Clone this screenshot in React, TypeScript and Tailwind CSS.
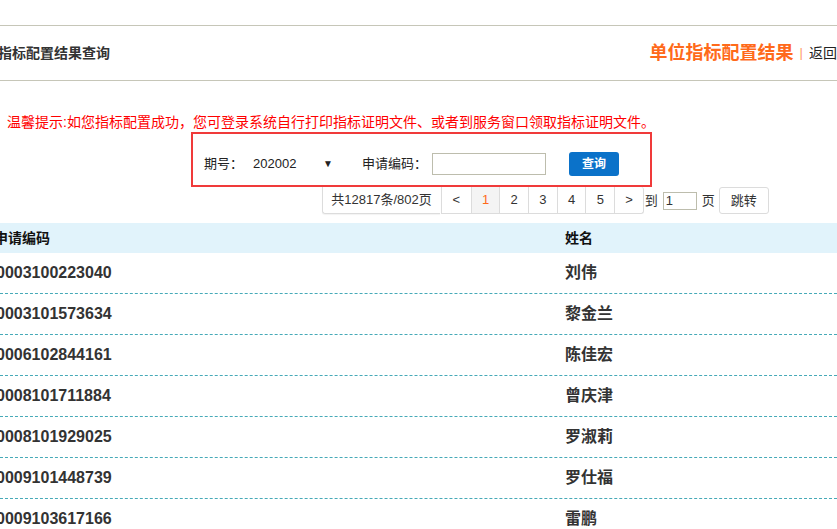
const rows: [string, string][] = [
  ["0003100223040", "刘伟"],
  ["0003101573634", "黎金兰"],
  ["0006102844161", "陈佳宏"],
  ["0008101711884", "曾庆津"],
  ["0008101929025", "罗淑莉"],
  ["0009101448739", "罗仕福"],
  ["0009103617166", "雷鹏"],
];

const pages = ["<", "1", "2", "3", "4", "5", ">"];

export default function App() {
  return (
    <div className="w-[837px] h-[529px] overflow-hidden bg-white text-[#333] font-['Liberation_Sans','Noto_Sans_CJK_SC',sans-serif]">
      <div className="h-[25px]" />

      {/* top bar */}
      <div className="flex items-center h-[56px] border-y border-[#c6c6b8]">
        <h2 className="ml-[-2px] text-[14px] font-bold text-[#333]">指标配置结果查询</h2>
        <div className="ml-auto mr-0 flex items-center shrink-0">
          <span className="text-[18px] font-bold text-[#ff6a1a]">单位指标配置结果</span>
          <span className="mx-[6px] text-[13px] text-[#ff9a66]">|</span>
          <span className="text-[14px] text-[#222]">返回</span>
        </div>
      </div>

      <p className="mt-[31px] ml-[7px] h-[20px] leading-[20px] text-[14px] text-[#ff0000] whitespace-nowrap">
        温馨提示:如您指标配置成功，您可登录系统自行打印指标证明文件、或者到服务窗口领取指标证明文件。
      </p>

      {/* search form */}
      <div className="ml-[191px] w-[461px] h-[55px] border-2 border-[#f03a3a] flex items-center pl-[11px] text-[13px] text-[#222] pt-[8px]">
        <span>期号：</span>
        <div className="ml-[10px] w-[80px] flex items-center">
          <span>202002</span>
          <span className="ml-auto text-[10px]">▼</span>
        </div>
        <span className="ml-[29px]">申请编码：</span>
        <div className="ml-[5px] w-[114px] h-[22px] border border-[#bdbdad] bg-white" />
        <button className="ml-[23px] w-[50px] h-[24px] rounded-[3px] bg-[#0b72c9] text-white text-[12px] font-bold">
          查询
        </button>
      </div>

      {/* pagination */}
      <div className="flex items-center h-[27px] text-[13px] text-[#333]">
        <div className="ml-[322px] w-[118px] h-[27px] flex items-center justify-center border-l border-b border-[#dcdcdc] rounded-bl-[3px] shadow-[0_1px_1px_rgba(0,0,0,0.05)]">
          共12817条/802页
        </div>
        <div className="ml-[1px] flex h-[27px] border border-[#dcdcdc] rounded-r-[3px] border-t-0">
          {pages.map((p, i) => (
            <div
              key={p}
              className={`w-[28.7px] h-full flex items-center justify-center ${
                i > 0 ? "border-l border-[#dcdcdc]" : ""
              } ${p === "1" ? "bg-[#f4f4f4] text-[#ff6a1a]" : ""}`}
            >
              {p}
            </div>
          ))}
        </div>
        <span className="ml-[1px]">到</span>
        <div className="ml-[5px] w-[34px] h-[18px] border border-[#bdbdad] text-[13px] leading-[16px] pl-[2px]">1</div>
        <span className="ml-[5px]">页</span>
        <button className="ml-[4px] w-[50px] h-[27px] border border-[#dcdcdc] rounded-[3px] bg-white text-[13px]">
          跳转
        </button>
      </div>

      {/* table */}
      <div className="mt-[9px]">
        <div className="flex items-center h-[30px] bg-[#e1f3fb] text-[14px] font-bold text-[#111]">
          <div className="w-[565px] shrink-0 ml-[-6px]">申请编码</div>
          <div className="ml-[6px]">姓名</div>
        </div>
        {rows.map(([code, name]) => (
          <div key={code} className="flex items-center h-[41px] border-b border-dashed border-[#46aab8]">
            <div className="w-[565px] shrink-0 ml-[-4px] text-[16px] font-bold text-[#333]">{code}</div>
            <div className="ml-[4px] text-[16px] font-bold text-[#333]">{name}</div>
          </div>
        ))}
      </div>
    </div>
  );
}
